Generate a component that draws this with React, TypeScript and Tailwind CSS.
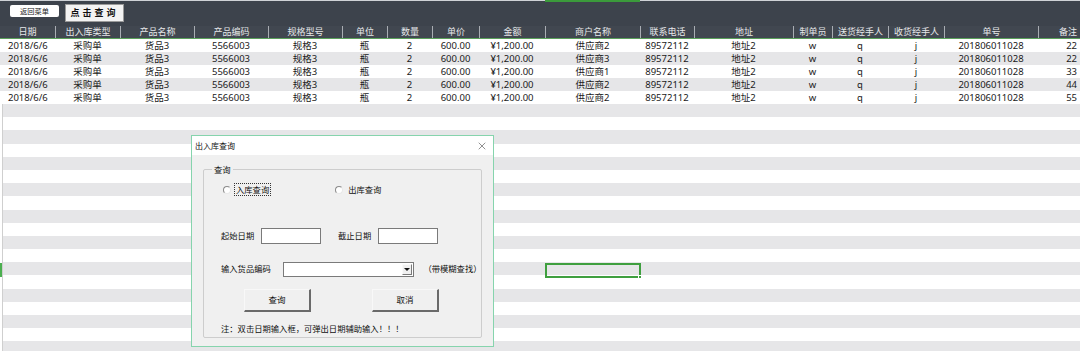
import { X } from "lucide-react";

const font = "font-['Noto_Sans','Noto_Sans_CJK_SC',sans-serif]";

const headers = [
  "日期",
  "出入库类型",
  "产品名称",
  "产品编码",
  "规格型号",
  "单位",
  "数量",
  "单价",
  "金额",
  "商户名称",
  "联系电话",
  "地址",
  "制单员",
  "送货经手人",
  "收货经手人",
  "单号",
  "备注",
];

const rows = [
  ["供应商2", "22"],
  ["供应商3", "22"],
  ["供应商1", "33"],
  ["供应商2", "44"],
  ["供应商2", "55"],
];

const cols =
  "grid grid-cols-[55px_65px_74px_74px_74px_45px_45px_47px_66px_95px_54px_99px_39px_56px_56px_94px_42px]";

function Radio({ label, focus }: { label: string; focus?: boolean }) {
  return (
    <div className="flex items-center gap-[3px]">
      <span className="h-[8px] w-[8px] rounded-full border border-t-[#8a8a8a] border-l-[#8a8a8a] border-r-[#e8e8e8] border-b-[#e8e8e8] bg-white" />
      <span className={focus ? "border border-dotted border-[#333] px-[1px] leading-[11px]" : "px-[2px] leading-[11px]"}>
        {label}
      </span>
    </div>
  );
}

function Input({ w }: { w: string }) {
  return <div className={`${w} h-[16px] border border-[#7a7a7a] bg-white`} />;
}

function WinButton({ label }: { label: string }) {
  return (
    <div className="flex h-[23px] w-[67px] items-center justify-center border-b-2 border-r-2 border-t border-l border-t-[#f8f8f8] border-l-[#f8f8f8] border-b-[#6a6a6a] border-r-[#6a6a6a] bg-[#f0f0f0] text-[8.5px]">
      {label}
    </div>
  );
}

export default function App() {
  return (
    <div className={`relative h-[351px] w-[1080px] overflow-hidden bg-white ${font} text-[#1a1a1a]`}>
      {/* toolbar */}
      <div className="relative flex h-[26px] items-start gap-[6px] border-t border-[#cfd2d6] bg-[#3d434c] pl-[10px] pt-[3px]">
        <div className="absolute left-[545px] top-[-1px] h-[2px] w-[95px] bg-[#3b9a3b]" />
        <div className="mt-[1px] flex h-[12px] w-[49px] items-center justify-center rounded-[2px] bg-white text-[7.2px] text-[#222]">
          返回菜单
        </div>
        <div className="flex h-[18px] w-[59px] items-center justify-center border border-[#9a9a9a] bg-[#f3f3f3] text-[9px] font-bold tracking-[3px] text-[#111]">
          点击查询
        </div>
      </div>

      {/* header */}
      <div className={`${cols} h-[13px] border-b border-[#5aa05a] bg-[#414750] text-[9px] leading-[12px] text-[#e6e8ea]`}>
        {headers.map((h, i) => (
          <div
            key={h}
            className={`${i > 0 ? "border-l border-[#a9adb3]" : ""} ${i === 16 ? "pr-[3px] text-right" : "text-center"}`}
          >
            {h}
          </div>
        ))}
      </div>

      {/* data */}
      {rows.map(([shop, note], r) => (
        <div
          key={r}
          className={`${cols} h-[13px] text-[9.5px] leading-[13px] ${r % 2 === 1 ? "bg-[#e6e6e8]" : "bg-white"}`}
        >
          <div className="pl-[8px]">2018/6/6</div>
          <div className="text-center">采购单</div>
          <div className="text-center">货品3</div>
          <div className="text-center">5566003</div>
          <div className="text-center">规格3</div>
          <div className="text-center">瓶</div>
          <div className="text-center">2</div>
          <div className="text-center">600.00</div>
          <div className="text-center">¥1,200.00</div>
          <div className="text-center">{shop}</div>
          <div className="text-center">89572112</div>
          <div className="text-center">地址2</div>
          <div className="text-center">w</div>
          <div className="text-center">q</div>
          <div className="text-center">j</div>
          <div className="text-center">201806011028</div>
          <div className="pr-[3px] text-right">{note}</div>
        </div>
      ))}

      {/* empty sheet rows */}
      <div className="flex flex-col border-l-[3px] border-white">
        {Array.from({ length: 19 }).map((_, i) => (
          <div key={i} className={`h-[13.2px] ${i % 2 === 0 ? "bg-[#e6e6e8]" : "bg-white"}`} />
        ))}
      </div>
      <div className="absolute left-[2px] top-[104px] h-[247px] w-px bg-[#cfcfcf]" />
      <div className="absolute left-0 top-[263px] h-[14px] w-[2px] bg-[#4caf50]" />

      {/* selected cell */}
      <div className="absolute left-[545px] top-[263px] h-[15px] w-[96px] border-2 border-[#3f9f3f]">
        <div className="absolute -bottom-[3px] -right-[3px] h-[4px] w-[4px] border border-white bg-[#3f9f3f]" />
      </div>

      {/* dialog */}
      <div className="absolute left-[191px] top-[135px] flex h-[212px] w-[303px] flex-col border border-[#86d4ad] bg-[#f0f0f0] text-[8.3px] text-[#111]">
        <div className="flex h-[19px] items-center justify-between bg-white pl-[3px] pr-[5px] text-[8px]">
          <span>出入库查询</span>
          <X size={12} strokeWidth={1} className="text-[#222]" />
        </div>
        <div className="px-[11px] pt-[14px]">
          <div className="relative h-[169px] rounded-[2px] border border-[#cdcdcd] pl-[17px] pt-[13px]">
            <span className="absolute -top-[6px] left-[8px] bg-[#f0f0f0] px-[2px] leading-[11px]">查询</span>
            <div className="flex gap-[64px] pl-[2px]">
              <Radio label="入库查询" focus />
              <Radio label="出库查询" />
            </div>
            <div className="mt-[32px] flex items-center">
              <span className="w-[40px]">起始日期</span>
              <Input w="w-[60px]" />
              <span className="ml-[17px] w-[40px]">截止日期</span>
              <Input w="w-[60px]" />
            </div>
            <div className="mt-[18px] flex items-center">
              <span className="w-[63px]">输入货品编码</span>
              <div className="flex h-[15px] w-[132px] items-center justify-end border border-[#7a7a7a] bg-white">
                <div className="mr-[1px] flex h-[11px] w-[10px] items-center justify-center border border-t-[#fafafa] border-l-[#fafafa] border-r-[#7a7a7a] border-b-[#7a7a7a] bg-[#f0f0f0]">
                  <div className="h-0 w-0 border-x-[3px] border-t-[3px] border-x-transparent border-t-[#111]" />
                </div>
              </div>
              <span className="ml-[9px]">（带模糊查找）</span>
            </div>
            <div className="mt-[12px] flex gap-[61px] pl-[23px]">
              <WinButton label="查询" />
              <WinButton label="取消" />
            </div>
            <div className="mt-[11px]">注：双击日期输入框，可弹出日期辅助输入！！！</div>
          </div>
        </div>
      </div>
    </div>
  );
}
